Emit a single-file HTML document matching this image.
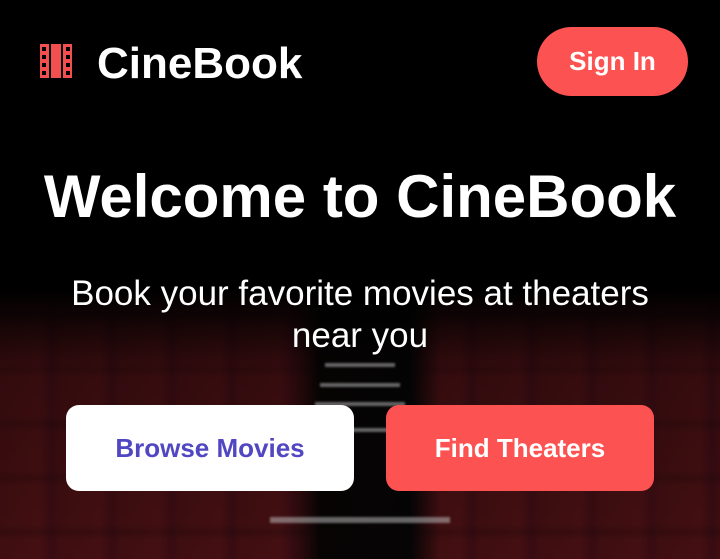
<!DOCTYPE html>
<html><head><style>
*{margin:0;padding:0;box-sizing:border-box}
body{width:720px;height:559px;overflow:hidden;font-family:"Liberation Sans",sans-serif;position:relative;background:#000}
.bg{position:absolute;inset:0;
background:
linear-gradient(to bottom,#000 0,#000 290px,rgba(0,0,0,0.45) 370px,rgba(0,0,0,0.3) 559px),
linear-gradient(to right,transparent 0,transparent 290px,#0a0505 320px,#080606 410px,transparent 440px),
repeating-linear-gradient(to bottom,rgba(0,0,0,0) 0,rgba(0,0,0,0) 38px,rgba(0,0,0,0.15) 46px,rgba(0,0,0,0) 54px),
repeating-linear-gradient(to right,#5a1418 0,#62161a 40px,#50111a 52px,#5a1418 60px),
#4a0f12}
.st{position:absolute;left:50%;transform:translateX(-50%);background:rgba(200,200,200,0.5);height:4px;filter:blur(1px)}
.icon{position:absolute;left:40px;top:44px;width:32px;height:34px;background:#f25050}
.icon i{position:absolute;width:4px;height:4px;background:#000}
.logo{position:absolute;left:97px;top:39px;font-size:44px;font-weight:bold;color:#fff}
.sign{position:absolute;left:537px;top:27px;width:151px;height:69px;border-radius:35px;background:#fd5252;color:#fff;font-size:26px;font-weight:bold;display:flex;align-items:center;justify-content:center}
h1{position:absolute;left:0;width:720px;top:162px;text-align:center;color:#fff;font-size:60px;font-weight:bold}
p{position:absolute;left:0;width:720px;top:273px;text-align:center;color:#fff;font-size:35px;line-height:42px}
.b{position:absolute;top:405px;height:86px;border-radius:13px;display:flex;align-items:center;justify-content:center;font-size:26px;font-weight:bold}
</style></head><body>
<div class="bg"></div>
<div class="st" style="top:363px;width:70px"></div>
<div class="st" style="top:383px;width:80px"></div>
<div class="st" style="top:402px;width:90px"></div>
<div class="st" style="top:428px;width:100px"></div>
<div class="st" style="top:517px;width:180px;height:6px"></div>
<div class="icon">
<i style="left:2px;top:3px"></i><i style="left:2px;top:11px"></i><i style="left:2px;top:19px"></i><i style="left:2px;top:27px"></i>
<i style="left:26px;top:3px"></i><i style="left:26px;top:11px"></i><i style="left:26px;top:19px"></i><i style="left:26px;top:27px"></i>
<i style="left:9px;top:0;width:2px;height:34px"></i><i style="left:21px;top:0;width:2px;height:34px"></i>
</div>
<div class="logo">CineBook</div>
<div class="sign">Sign In</div>
<h1>Welcome to CineBook</h1>
<p>Book your favorite movies at theaters<br>near you</p>
<div class="b" style="left:66px;width:288px;background:#fff;color:#5147c2">Browse Movies</div>
<div class="b" style="left:386px;width:268px;background:#fd5252;color:#fff">Find Theaters</div>
</body></html>
